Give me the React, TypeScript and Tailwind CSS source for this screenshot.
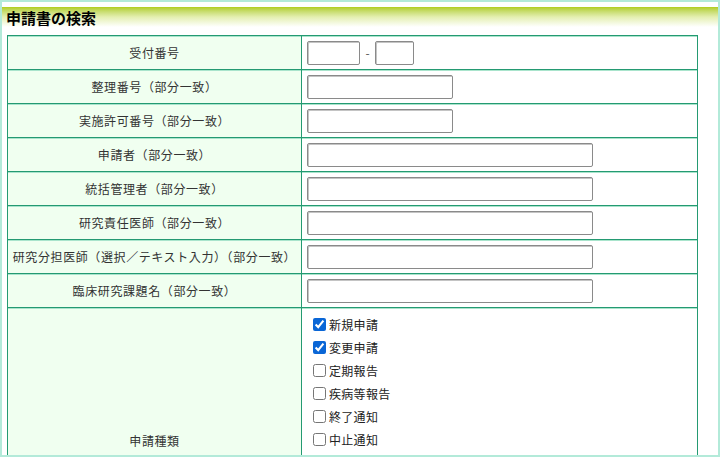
const font = { fontFamily: '"Noto Sans CJK JP", "Noto Sans", sans-serif' };

type Row = { label: string; width?: string };

const rows: Row[] = [
  { label: "整理番号（部分一致）", width: "w-[146px]" },
  { label: "実施許可番号（部分一致）", width: "w-[146px]" },
  { label: "申請者（部分一致）" },
  { label: "統括管理者（部分一致）" },
  { label: "研究責任医師（部分一致）" },
  { label: "研究分担医師（選択／テキスト入力）（部分一致）" },
  { label: "臨床研究課題名（部分一致）" },
];

const kinds = [
  { name: "新規申請", checked: true },
  { name: "変更申請", checked: true },
  { name: "定期報告", checked: false },
  { name: "疾病等報告", checked: false },
  { name: "終了通知", checked: false },
  { name: "中止通知", checked: false },
];

function TextBox({ className }: { className: string }) {
  return (
    <input
      type="text"
      className={`h-[24px] border border-[#8a8a8a] rounded-[2px] bg-white shadow-[inset_1px_1px_0_#c4c4c4] ${className}`}
    />
  );
}

function Label({ children }: { children: React.ReactNode }) {
  return (
    <td className="w-[294px] bg-[#f0fff0] text-center align-middle text-[12px] tracking-[0.6px] text-[#333] border border-[#249a72] shadow-[inset_0_1px_0_#a9e4cc]">
      {children}
    </td>
  );
}

function Field({ children }: { children: React.ReactNode }) {
  return (
    <td className="h-[34px] pl-[5px] align-middle border border-[#249a72] shadow-[inset_0_1px_0_#a9e4cc]">
      {children}
    </td>
  );
}

export default function App() {
  return (
    <div
      style={font}
      className="w-[720px] h-[457px] overflow-hidden bg-white border-2 border-[#b3ead9] text-[#222]"
    >
      <div className="mt-[5px] h-[20px] pl-[4px] bg-gradient-to-b from-[#b2cd12] via-[#e4efb0] to-white flex items-center">
        <h2 className="text-[15px] font-bold text-black leading-none">申請書の検索</h2>
      </div>
      <table className="mt-[8px] ml-[5px] w-[691px] border-collapse">
        <tbody>
          <tr>
            <Label>受付番号</Label>
            <Field>
              <div className="flex items-center">
                <TextBox className="w-[53px]" />
                <span className="w-[15px] text-center text-[12px] text-[#555]">-</span>
                <TextBox className="w-[39px]" />
              </div>
            </Field>
          </tr>
          {rows.map((r) => (
            <tr key={r.label}>
              <Label>{r.label}</Label>
              <Field>
                <TextBox className={`block ${r.width ?? "w-[286px]"}`} />
              </Field>
            </tr>
          ))}
          <tr>
            <Label>申請種類</Label>
            <td className="h-[266px] pl-[11px] pt-[5px] align-top border border-[#249a72] shadow-[inset_0_1px_0_#a9e4cc]">
              <div className="flex flex-col">
                {kinds.map((k) => (
                  <label
                    key={k.name}
                    className="h-[23px] flex items-center gap-[3px] text-[12px] tracking-[0.3px] text-[#222]"
                  >
                    <input
                      type="checkbox"
                      defaultChecked={k.checked}
                      className="w-[13px] h-[13px] m-0 accent-[#0a66d6]"
                    />
                    {k.name}
                  </label>
                ))}
              </div>
            </td>
          </tr>
        </tbody>
      </table>
    </div>
  );
}
